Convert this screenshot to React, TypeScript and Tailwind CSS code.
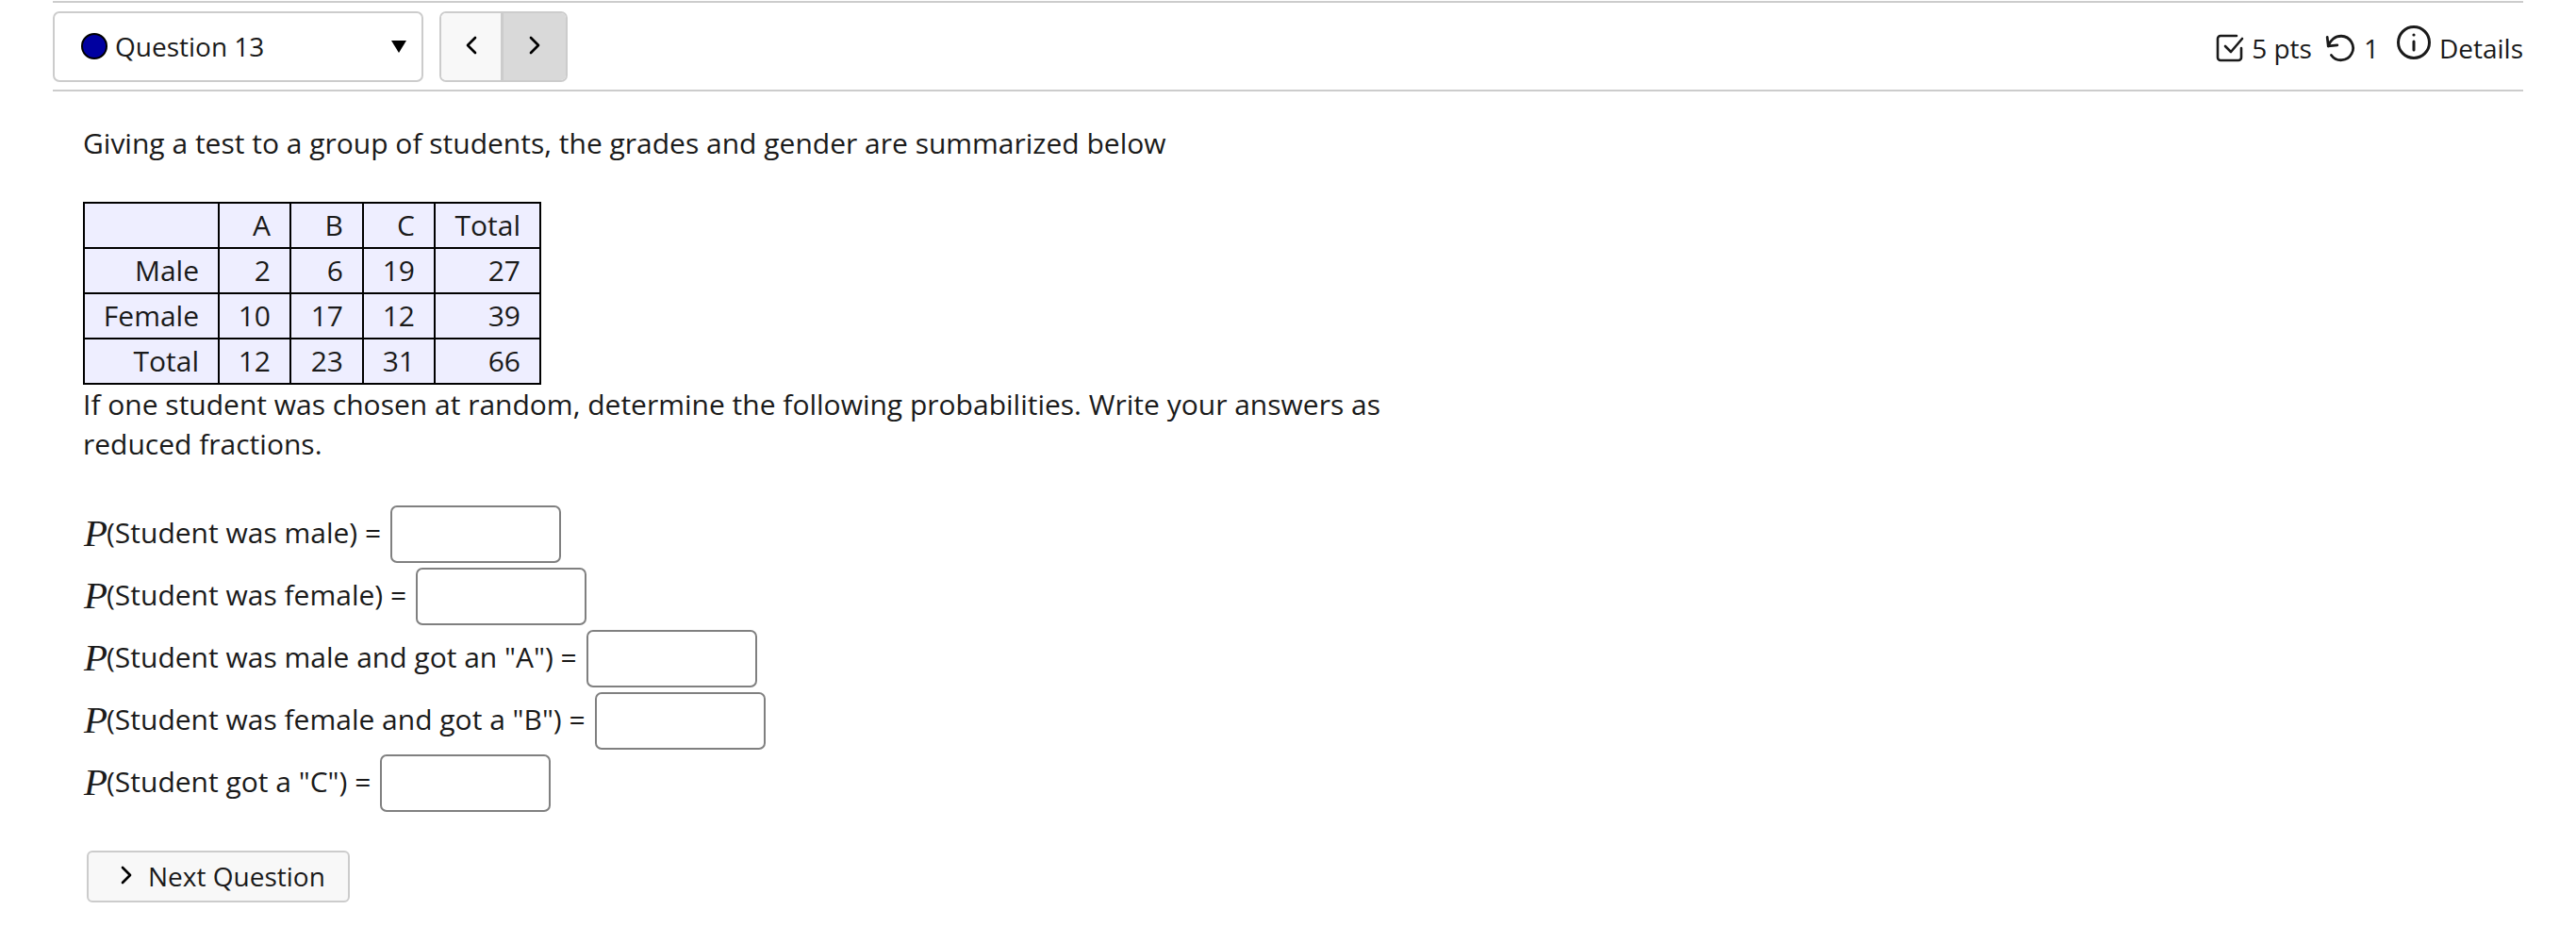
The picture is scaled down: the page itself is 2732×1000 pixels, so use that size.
import { ChevronLeft, ChevronRight } from "lucide-react";

const rows = [
  ["", "A", "B", "C", "Total"],
  ["Male", "2", "6", "19", "27"],
  ["Female", "10", "17", "12", "39"],
  ["Total", "12", "23", "31", "66"],
];

const colWidths = ["w-[143px]", "w-[76px]", "w-[77px]", "w-[76px]", "w-[112px]"];

const questions = [
  'Student was male) =',
  'Student was female) =',
  'Student was male and got an "A") =',
  'Student was female and got a "B") =',
  'Student got a "C") =',
];

function Answer({ label }: { label: string }) {
  return (
    <div className="flex h-[66px] items-center">
      <span className="-mt-[2px] ml-[1px] w-[24px] font-['Liberation_Serif',serif] text-[41px] leading-none italic">P</span>
      <span className="-mt-[2px]">(</span>
      <span className="-mt-[2px]">{label}</span>
      <input className="ml-[10px] h-[61px] w-[181px] rounded-[7px] border-2 border-[#808080] bg-white" />
    </div>
  );
}

export default function App() {
  return (
    <div className="min-h-[1000px] bg-white px-[56px] pt-[1px] font-['Open_Sans',sans-serif] text-[30px] leading-[42px] text-[#1a1a1a]">
      {/* top bar */}
      <div className="flex h-[96px] items-center justify-between border-y-2 border-[#cccccc] text-[28px]">
        <div className="flex items-center gap-[17px]">
          <div className="flex h-[75px] w-[393px] items-center rounded-[7px] border-2 border-[#cccccc] bg-white pr-[16px] pl-[28px]">
            <span className="h-[28px] w-[28px] rounded-full border-2 border-black bg-[#0000a0]" />
            <span className="ml-[8px] flex-1">Question 13</span>
            <svg width="16" height="13" viewBox="0 0 16 13" className="fill-black">
              <path d="M0 0h16L8 13z" />
            </svg>
          </div>
          <div className="flex h-[75px] w-[136px] overflow-hidden rounded-[7px] border-2 border-[#cccccc]">
            <div className="flex w-[66px] items-center justify-center border-r-3 border-[#cccccc] bg-[#f8f8f8]">
              <ChevronLeft size={32} strokeWidth={2} className="-mt-0.5 text-black" />
            </div>
            <div className="flex flex-1 items-center justify-center bg-[#d9d9d9]">
              <ChevronRight size={32} strokeWidth={2} className="-mt-0.5 text-black" />
            </div>
          </div>
        </div>
        <div className="mt-[4px] flex items-center">
          <svg width="32" height="32" viewBox="0 0 32 32" fill="none" stroke="#1a1a1a" strokeWidth="2.6" strokeLinecap="round" strokeLinejoin="round">
            <path d="M28 16v10a3 3 0 0 1-3 3H6a3 3 0 0 1-3-3V6a3 3 0 0 1 3-3h17" />
            <path d="M11 14l6 6L29 6" />
          </svg>
          <span className="ml-[7px]">5 pts</span>
          <svg className="ml-[13px]" width="34" height="34" viewBox="0 0 32 32" fill="none" stroke="#1a1a1a" strokeWidth="2.6" strokeLinecap="round" strokeLinejoin="round">
            <path d="M3 5l1 9 9-1" />
            <path d="M4 14C6 8 11 4 17 4a12 12 0 1 1-10 19" />
          </svg>
          <span className="ml-[8px]">1</span>
          <svg className="mb-[12px] ml-[18px]" width="38" height="38" viewBox="0 0 38 38" fill="none" stroke="#1a1a1a" strokeWidth="3" strokeLinecap="round">
            <circle cx="19" cy="19" r="16.5" />
            <path d="M19 18v9" />
            <circle cx="19" cy="11" r="1.6" fill="#1a1a1a" stroke="none" />
          </svg>
          <span className="ml-[8px]">Details</span>
        </div>
      </div>

      <div className="pl-[32px]">
        <p className="mt-[34px]">Giving a test to a group of students, the grades and gender are summarized below</p>

        {/* grades table */}
        <table className="mt-[41px] border-collapse bg-[#eeeeff] text-right">
          <tbody>
            {rows.map((row, i) => (
              <tr key={i} className="h-[48px]">
                {row.map((cell, j) => (
                  <td key={j} className={`border-2 border-black pr-[20px] leading-[44px] ${colWidths[j]}`}>
                    {cell}
                  </td>
                ))}
              </tr>
            ))}
          </tbody>
        </table>

        <p className="w-[1420px]">
          If one student was chosen at random, determine the following probabilities. Write your answers as reduced fractions.
        </p>

        <div className="mt-[41px]">
          {questions.map((q) => (
            <Answer key={q} label={q} />
          ))}
        </div>

        <button className="mt-[39px] ml-[4px] flex h-[55px] w-[279px] items-center rounded-[6px] border-2 border-[#cccccc] bg-[#f8f8f8] pl-[24px] text-[28px]">
          <ChevronRight size={32} strokeWidth={2} className="-mt-1 text-black" />
          <span className="-mt-[2px] ml-[7px]">Next Question</span>
        </button>
      </div>
    </div>
  );
}
